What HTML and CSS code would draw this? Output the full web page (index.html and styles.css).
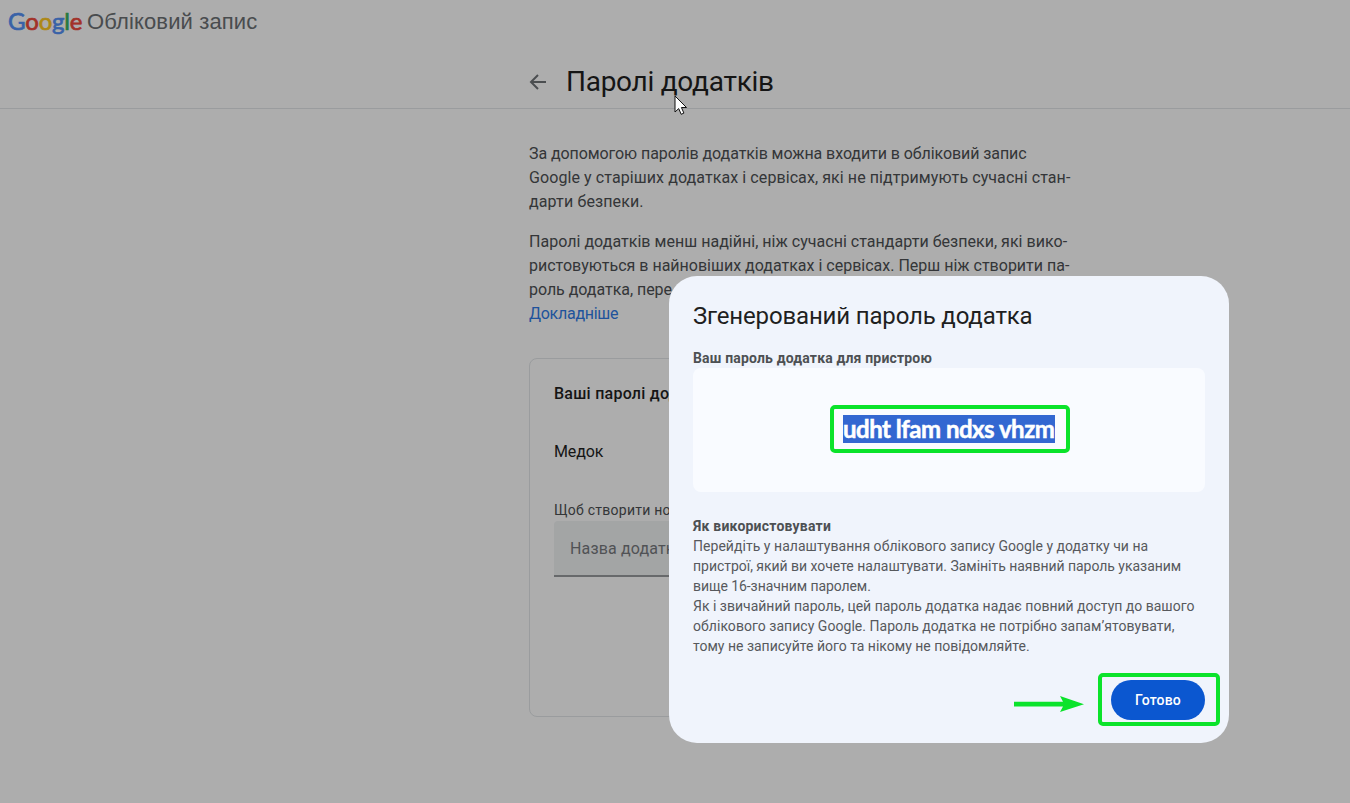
FILE: index.html
```html
<!DOCTYPE html>
<html lang="uk">
<head>
    <meta charset="UTF-8">
    <meta name="viewport" content="width=device-width, initial-scale=1.0">
    <title>Паролі додатків</title>
    <link rel="stylesheet" href="styles.css">
</head>
<body>
    <header class="topbar">
        <div class="logo"><span class="blue">G</span><span class="red">o</span><span class="yellow">o</span><span class="blue">g</span><span class="green">l</span><span class="red">e</span></div>
        <span class="product">Обліковий запис</span>
    </header>
    <div class="page-title">
        <svg class="back" width="18" height="18" viewBox="0 0 18 18">
            <path d="M17 9H2.5M9 2L2 9L9 16" fill="none" stroke="#6f7377" stroke-width="2"/>
        </svg>
        <h1>Паролі додатків</h1>
    </div>

    <main>
        <p><span class="l1">За допомогою паролів додатків можна входити в обліковий запис</span><br><span class="l2">Google у старіших додатках і сервісах, які не підтримують сучасні стан-</span><br><span class="l3">дарти безпеки.</span></p>
        <p><span class="l4">Паролі додатків менш надійні, ніж сучасні стандарти безпеки, які вико-</span><br>ристовуються в найновіших додатках і сервісах. Перш ніж створити па-<br><span class="l6">роль додатка, пере</span><br><a href="#">Докладніше</a></p>

        <section class="card">
            <h2>Ваші паролі додатків</h2>
            <div class="app-name">Медок</div>
            <label for="appName">Щоб створити новий</label>
            <input type="text" id="appName" placeholder="Назва додатка">
        </section>
    </main>

    <div class="scrim">
        <div class="dialog">
            <h2>Згенерований пароль додатка</h2>
            <h3 class="device">Ваш пароль додатка для пристрою</h3>
            <div class="password-box">
                <div class="highlight"><span class="password">udht lfam ndxs vhzm</span></div>
            </div>
            <h3 class="howto">Як використовувати</h3>
            <p><span class="d1">Перейдіть у налаштування облікового запису Google у додатку чи на</span><br><span class="d2">пристрої, який ви хочете налаштувати. Замініть наявний пароль указаним</span><br><span class="d3">вище 16-значним паролем.</span><br>Як і звичайний пароль, цей пароль додатка надає повний доступ до вашого<br><span class="d5">облікового запису Google. Пароль додатка не потрібно запам’ятовувати,</span><br>тому не записуйте його та нікому не повідомляйте.</p>
            <div class="actions">
                <svg class="arrow" width="70" height="18" viewBox="0 0 70 18">
                    <path d="M0 6.8H49L46 1L70 9.3L46 17L49 11.4H0Z" fill="#0be32b"/>
                </svg>
                <div class="button-frame"><button>Готово</button></div>
            </div>
        </div>
    </div>

    <svg class="cursor" width="14" height="21" viewBox="0 0 14 21">
        <path d="M1 1V17L4.7 13.6L7.2 19.3L9.9 18.1L7.4 12.5H12.5Z" fill="#fff" stroke="#111" stroke-width="1"/>
    </svg>
</body>
</html>
```

FILE: styles.css
```css
* {
    box-sizing: border-box;
}

body {
    font-family: Roboto, "Open Sans", sans-serif;
    background: #fff;
    color: #4d5053;
    margin: 0;
    height: 803px;
    overflow: hidden;
}

h1, h2, h3, p {
    margin: 0;
    font-weight: normal;
}

p, h1, h2, h3, label {
    white-space: nowrap;
}

/* Header */
.topbar {
    display: flex;
    align-items: center;
    height: 44px;
    padding-left: 8px;
    gap: 5px;
}

.logo {
    font: 24px/30px Lato, sans-serif;
    width: 74px;
    padding-bottom: 2px;
    letter-spacing: -0.2px;
    -webkit-text-stroke: 0.7px;
}

.blue { color: #5591f7; }
.red { color: #ef4a3c; }
.yellow { color: #ffc91f; }
.green { color: #3ab45c; }

.product {
    font: 22px/30px "Liberation Sans", sans-serif;
    letter-spacing: 0.13px;
    color: #6c7074;
}

.page-title {
    display: flex;
    align-items: center;
    height: 65px;
    padding: 11px 0 0 529px;
    gap: 19px;
    border-bottom: 1px solid #e3e6e9;
}

h1 {
    font-size: 28px;
    line-height: 36px;
    letter-spacing: -0.27px;
    color: #1f1f1f;
}

/* Content column */
main {
    width: 543px;
    margin: 33px 0 0 529px;
}

main p {
    font-size: 16px;
    line-height: 24px;
    margin-bottom: 16px;
}

.l1 { letter-spacing: -0.08px; }
.l2 { letter-spacing: 0.085px; }
.l3 { letter-spacing: 0.13px; }
.l4 { letter-spacing: 0.03px; }
.l6 { letter-spacing: -0.04px; }

a {
    color: #2f7be6;
    letter-spacing: -0.27px;
    text-decoration: none;
}

.card {
    height: 359px;
    margin-top: 32px;
    padding: 23px 24px;
    border: 1px solid #e3e6e9;
    border-radius: 8px;
}

.card h2 {
    font-size: 16px;
    line-height: 24px;
    font-weight: 500;
    letter-spacing: 0.25px;
    color: #1f1f1f;
}

.app-name {
    margin: 34px 0 36px;
    font-size: 16px;
    line-height: 24px;
    letter-spacing: -0.15px;
    color: #1f1f1f;
}

.card label {
    display: block;
    font-size: 14px;
    line-height: 20px;
    letter-spacing: 0.25px;
}

.card input {
    display: block;
    width: 100%;
    height: 56px;
    margin-top: 1px;
    padding: 0 16px;
    border: 0;
    border-bottom: 2px solid #989b9e;
    border-radius: 4px 4px 0 0;
    background: #f1f3f4;
    font: 16px Roboto, sans-serif;
    letter-spacing: 0.15px;
}

.card input::placeholder {
    color: #777a7e;
}

/* Dialog over the dimmed page */
.scrim {
    position: fixed;
    inset: 0;
    padding: 276px 0 0 669px;
    background: rgba(0, 0, 0, 0.32);
}

.dialog {
    width: 560px;
    height: 467px;
    padding: 24px;
    border-radius: 28px;
    background: #f0f4fc;
}

.dialog h2 {
    font-size: 24px;
    line-height: 32px;
    letter-spacing: -0.16px;
    color: #1f1f1f;
}

.dialog h3 {
    font-size: 14px;
    line-height: 20px;
    font-weight: bold;
}

.dialog .device {
    margin-top: 16px;
    letter-spacing: 0.17px;
}

.dialog .howto {
    letter-spacing: 0.22px;
}

.password-box {
    display: flex;
    justify-content: center;
    align-items: center;
    height: 124px;
    margin-bottom: 24px;
    border-radius: 8px;
    background: #f9fbff;
}

.highlight {
    display: flex;
    justify-content: center;
    align-items: center;
    width: 240px;
    height: 48px;
    margin-left: 2px;
    margin-top: -2px;
    padding-right: 2px;
    border: 4px solid #0be32b;
    border-radius: 5px;
}

.password {
    width: 212px;
    font: bold 24px/28px Lato, sans-serif;
    letter-spacing: -0.5px;
    -webkit-text-stroke: 0.5px;
    color: #fff;
    background: #3367d1;
    white-space: nowrap;
}

.dialog p {
    font-size: 14px;
    line-height: 20px;
    color: #57595d;
}

.d1 { letter-spacing: 0.04px; }
.d2 { letter-spacing: -0.03px; }
.d3 { letter-spacing: -0.08px; }
.d5 { letter-spacing: 0.04px; }

.actions {
    display: flex;
    justify-content: flex-end;
    align-items: center;
    margin: 17px -15px 0 0;
}

.arrow {
    margin: 9px 14px 0 0;
}

.button-frame {
    display: flex;
    align-items: center;
    width: 122px;
    height: 53px;
    padding-left: 9px;
    border: 4px solid #0be32b;
    border-radius: 5px;
}

button {
    width: 94px;
    height: 40px;
    padding: 0;
    border: 0;
    border-radius: 20px;
    background: #0b57d0;
    color: #fff;
    font: 500 14px Roboto, sans-serif;
    letter-spacing: 0.15px;
    cursor: pointer;
}

.cursor {
    position: absolute;
    left: 674px;
    top: 95px;
}
```
